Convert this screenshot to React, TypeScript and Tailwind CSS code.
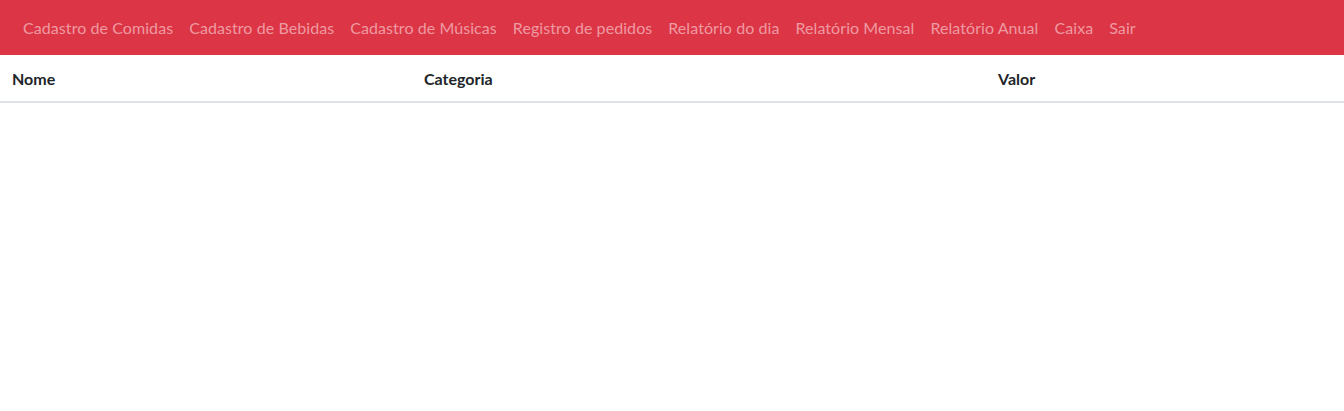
import React from 'react';

const links = [
  'Cadastro de Comidas',
  'Cadastro de Bebidas',
  'Cadastro de Músicas',
  'Registro de pedidos',
  'Relatório do dia',
  'Relatório Mensal',
  'Relatório Anual',
  'Caixa',
  'Sair',
];

const App: React.FC = () => {
  return (
    <div className="min-h-[411px] bg-white text-[#212529] font-['Lato','Liberation_Sans',sans-serif]">
      {/* Navbar */}
      <nav className="h-[55px] bg-[#dc3545] flex items-center pl-[15px] pr-4">
        <ul className="flex items-center">
          {links.map(l => (
            <li key={l}>
              <a href="#" className="block px-2 py-2 text-base leading-6 tracking-[0.07px] text-[#ee9aa2]">
                {l}
              </a>
            </li>
          ))}
        </ul>
      </nav>

      {/* Tabela */}
      <table className="w-full border-collapse">
        <thead>
          <tr className="border-b-2 border-[#dee2e6]">
            <th className="w-[412px] px-3 pt-3 pb-[10px] text-left font-bold text-base leading-6">Nome</th>
            <th className="w-[574px] px-3 pt-3 pb-[10px] text-left font-bold text-base leading-6">Categoria</th>
            <th className="px-3 pt-3 pb-[10px] text-left font-bold text-base leading-6">Valor</th>
          </tr>
        </thead>
        <tbody />
      </table>
    </div>
  );
};

export default App;
